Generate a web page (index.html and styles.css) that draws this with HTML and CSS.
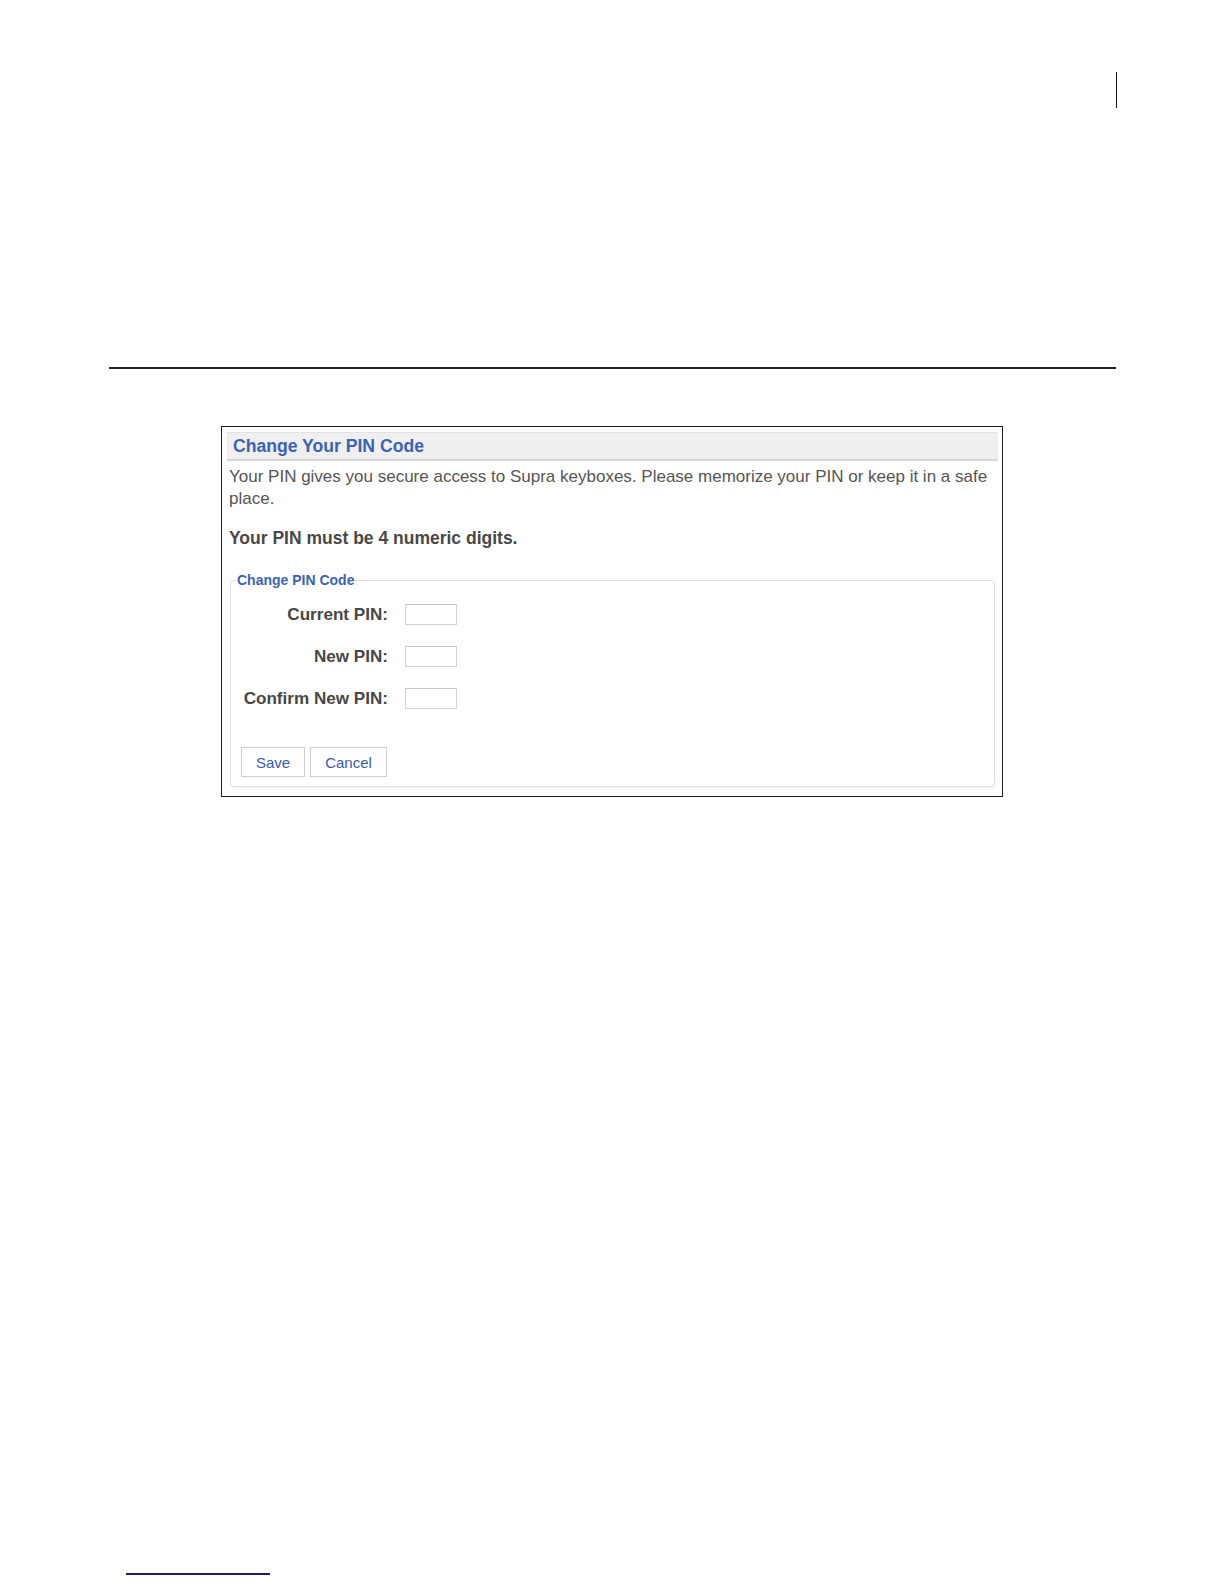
FILE: index.html
```html
<!DOCTYPE html>
<html>
<head>
<meta charset="utf-8">
<title>Change Your PIN Code</title>
<link rel="stylesheet" href="styles.css">
</head>
<body>
<div class="page">
  <div class="page-mark"></div>
  <div class="rule"></div>
  <div class="panel">
    <div class="panel-head">Change Your PIN Code</div>
    <div class="panel-body">
      <p class="intro">Your PIN gives you secure access to Supra keyboxes. Please memorize your PIN or keep it in a safe place.</p>
      <p class="note">Your PIN must be 4 numeric digits.</p>
      <fieldset class="pin-set">
        <legend>Change PIN Code</legend>
        <div class="pin-grid">
          <label class="pin-label" for="cur">Current PIN:</label>
          <input class="pin-input" id="cur" type="password">
          <label class="pin-label" for="new">New PIN:</label>
          <input class="pin-input" id="new" type="password">
          <label class="pin-label" for="conf">Confirm New PIN:</label>
          <input class="pin-input" id="conf" type="password">
        </div>
        <div class="actions">
          <button class="btn btn-save" type="button">Save</button>
          <button class="btn btn-cancel" type="button">Cancel</button>
        </div>
      </fieldset>
    </div>
  </div>
  <div class="foot-link"></div>
</div>
</body>
</html>
```

FILE: styles.css
```css
html, body {
  margin: 0;
  padding: 0;
  background: #ffffff;
}
body {
  font-family: "Liberation Sans", Arial, sans-serif;
}
.page {
  width: 1116px;
  padding-top: 72px;
  box-sizing: border-box;
}
.page-mark {
  height: 36px;
  width: 1117px;
  box-sizing: border-box;
  border-right: 1px solid #111;
}
.rule {
  margin-top: 259px;
  margin-left: 109px;
  width: 1007px;
  height: 0;
  border-top: 2px solid #222;
}
.panel {
  margin-top: 57px;
  margin-left: 221px;
  width: 782px;
  box-sizing: border-box;
  border: 1px solid #1e1e1e;
  padding: 5px 4px 9px 5px;
}
.panel-head {
  height: 29px;
  box-sizing: border-box;
  background: #efefef;
  border-top: 1px solid #e2e2e2;
  border-bottom: 2px solid #d6d6d6;
  padding-left: 6px;
  font-size: 17.6px;
  font-weight: bold;
  line-height: 27px;
  color: #3b63b0;
}
.panel-body {
  padding: 5px 3px 0 2px;
}
.intro {
  margin: 0;
  font-size: 17px;
  line-height: 22px;
  color: #555;
}
.note {
  margin: 17px 0 0 0;
  font-size: 17.5px;
  line-height: 22px;
  font-weight: bold;
  color: #484848;
}
.pin-set {
  margin: 23px 0 0 1px;
  padding: 15px 0 9px 0;
  border: 1px solid #dedede;
  border-radius: 4px;
  box-shadow: 0 1px 2px rgba(0,0,0,0.06);
}
.pin-set legend {
  margin-left: 5px;
  padding: 0 1px;
  font-size: 14px;
  font-weight: bold;
  line-height: 16px;
  color: #3b63b0;
}
.pin-grid {
  display: grid;
  grid-template-columns: 157px 52px;
  column-gap: 17px;
  row-gap: 20px;
  align-items: center;
}
.pin-label {
  text-align: right;
  font-size: 17.1px;
  font-weight: bold;
  color: #474747;
  padding-top: 2px;
}
.pin-input {
  width: 52px;
  height: 21px;
  box-sizing: border-box;
  margin: 0;
  border: 1px solid #d3d3d3;
  border-top-color: #c4c4c4;
  background: #fff;
  border-radius: 0;
  padding: 0;
}
.actions {
  margin-top: 38px;
  margin-left: 10px;
  display: flex;
  gap: 5px;
}
.btn {
  height: 30px;
  box-sizing: border-box;
  border: 1px solid #cfcfcf;
  background: #fff;
  color: #3a5aa6;
  font-family: "Liberation Sans", Arial, sans-serif;
  font-size: 15px;
  padding: 0;
  margin: 0;
  border-radius: 0;
}
.btn-save { width: 64px; }
.btn-cancel { width: 77px; }
.foot-link {
  margin-top: 776px;
  margin-left: 126px;
  width: 144px;
  height: 0;
  border-top: 2px solid #1c1c7a;
}
```
